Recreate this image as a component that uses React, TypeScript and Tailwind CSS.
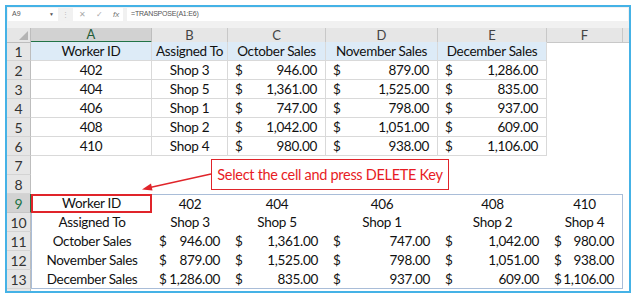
import type { ReactNode } from 'react';

const grid = 'grid grid-cols-[24px_121px_76px_98px_112px_109px_76px_1fr]';

const workers = [
  ['402', 'Shop 3', '946.00', '879.00', '1,286.00'],
  ['404', 'Shop 5', '1,361.00', '1,525.00', '835.00'],
  ['406', 'Shop 1', '747.00', '798.00', '937.00'],
  ['408', 'Shop 2', '1,042.00', '1,051.00', '609.00'],
  ['410', 'Shop 4', '980.00', '938.00', '1,106.00'],
];

const labels = ['Worker ID', 'Assigned To', 'October Sales', 'November Sales', 'December Sales'];

function RowHead({ n, active = false }: { n: number; active?: boolean }): ReactNode {
  return (
    <div
      className={`flex h-[19px] items-center justify-center border-b border-r text-[14px] tracking-normal ${
        active
          ? 'border-b-[#c6c6c6] border-r-[#217346] bg-[#d2d2d2] text-[#217346]'
          : 'border-b-[#d4d4d4] border-r-[#bdbdbd] bg-[#e6e6e6] text-[#333]'
      }`}
    >
      {n}
    </div>
  );
}

function Money({ value, className = '' }: { value: string; className?: string }): ReactNode {
  return (
    <div className={`flex h-[19px] items-center justify-between pl-[7px] pr-[8px] ${className}`}>
      <span>$</span>
      <span>{value}</span>
    </div>
  );
}

export default function App(): ReactNode {
  const topCell = 'flex h-[19px] items-center justify-center border-b border-r border-[#d9d9d9]';

  return (
    <div
      className="relative h-[298px] w-[636px] bg-white pl-[5px] pt-[5px] text-[13.5px] tracking-[-0.3px] text-[#111]"
      style={{ fontFamily: 'Lato, "Liberation Sans", sans-serif' }}
    >
      <div className="flex h-[288px] w-[626px] flex-col overflow-hidden border-2 border-[#45b2e6]">
        {/* formula bar */}
        <div
          className="flex h-[21px] items-start gap-[4px] bg-[#f1f1f1] px-[1px] pt-[1px] text-[7px] tracking-normal text-[#555]"
          style={{ fontFamily: '"Liberation Sans", sans-serif' }}
        >
          <div className="flex h-[13px] w-[50px] items-center justify-between bg-white px-[4px]">
            <span>A9</span>
            <span className="text-[5px]">▼</span>
          </div>
          <span className="leading-[13px] text-[#bbb]">⋮</span>
          <div className="flex h-[13px] w-[50px] items-center gap-[10px] bg-white pl-[6px] text-[8px] text-[#aaa]">
            <span>✕</span>
            <span>✓</span>
            <span className="italic text-[#777]">fx</span>
          </div>
          <div className="flex h-[13px] flex-1 items-center bg-white pl-[4px] tracking-[-0.2px]">=TRANSPOSE(A1:E6)</div>
        </div>

        {/* column headers */}
        <div className={`${grid} h-[14px] bg-[#e6e6e6] text-[13px] leading-none tracking-normal text-[#444]`}>
          <div className="relative border-b border-r border-[#bdbdbd]">
            <div className="absolute bottom-[2px] right-[2px] h-0 w-0 border-b-[9px] border-l-[9px] border-b-[#b4b4b4] border-l-transparent" />
          </div>
          <div className="flex items-center justify-center border-b-2 border-r border-b-[#217346] border-r-[#bdbdbd] bg-[#d2d2d2] text-[#1e5c37]">
            A
          </div>
          {['B', 'C', 'D', 'E', 'F'].map((c) => (
            <div key={c} className="flex items-center justify-center border-b border-r border-[#c8c8c8]">
              {c}
            </div>
          ))}
          <div className="border-b border-[#c8c8c8]" />
        </div>

        {/* row 1 */}
        <div className={grid}>
          <RowHead n={1} />
          {labels.map((l) => (
            <div key={l} className={`${topCell} bg-[#ddebf7]`}>
              {l}
            </div>
          ))}
          <div />
          <div />
        </div>

        {/* rows 2-6 */}
        {workers.map((w, i) => (
          <div key={w[0]} className={grid}>
            <RowHead n={i + 2} />
            <div className={topCell}>{w[0]}</div>
            <div className={topCell}>{w[1]}</div>
            <Money value={w[2]} className="border-b border-r border-[#d9d9d9]" />
            <Money value={w[3]} className="border-b border-r border-[#d9d9d9]" />
            <Money value={w[4]} className="border-b border-r border-[#d9d9d9]" />
            <div />
            <div />
          </div>
        ))}

        {/* rows 7-8 */}
        {[7, 8].map((n) => (
          <div key={n} className={grid}>
            <RowHead n={n} />
          </div>
        ))}

        {/* rows 9-13, transposed */}
        <div className={grid}>
          <RowHead n={9} active />
          <div className="flex h-[19px] items-center justify-center border-2 border-[#e0242a]">Worker ID</div>
          {workers.map((w, i) => (
            <div
              key={w[0]}
              className={`flex h-[19px] items-center justify-center border-t border-[#a9bdd8] ${i === 4 ? 'border-r' : ''}`}
            >
              {w[0]}
            </div>
          ))}
          <div />
        </div>
        <div className={grid}>
          <RowHead n={10} />
          <div className="flex h-[19px] items-center justify-center border-l border-[#a9bdd8]">Assigned To</div>
          {workers.map((w, i) => (
            <div
              key={w[0]}
              className={`flex h-[19px] items-center justify-center border-[#a9bdd8] ${i === 4 ? 'border-r' : ''}`}
            >
              {w[1]}
            </div>
          ))}
          <div />
        </div>
        {[2, 3, 4].map((k) => (
          <div key={k} className={grid}>
            <RowHead n={k + 9} />
            <div
              className={`flex h-[19px] items-center justify-center border-l border-[#a9bdd8] ${k === 4 ? 'border-b' : ''}`}
            >
              {labels[k]}
            </div>
            {workers.map((w, i) => (
              <Money
                key={w[0]}
                value={w[k]}
                className={`border-[#a9bdd8] ${i === 4 ? 'border-r' : ''} ${k === 4 ? 'border-b' : ''}`}
              />
            ))}
            <div />
          </div>
        ))}
        <div className={`${grid} flex-1`}>
          <div className="border-r border-[#bdbdbd] bg-[#e6e6e6]" />
        </div>
      </div>

      {/* callout */}
      <div className="absolute left-[211px] top-[159px] flex h-[31px] w-[238px] items-center justify-center whitespace-nowrap border border-[#e0242a] bg-white text-[14.5px] tracking-[-0.3px] text-[#e81c24]">
        Select the cell and press DELETE Key
      </div>
      <svg className="absolute left-0 top-0" width="636" height="298" viewBox="0 0 636 298" fill="none">
        <line x1="211" y1="174" x2="150" y2="187.5" stroke="#e0242a" strokeWidth="1.3" />
        <path d="M142 189.5 L151 183.5 L152.5 190.5 Z" fill="#e0242a" />
      </svg>
    </div>
  );
}
